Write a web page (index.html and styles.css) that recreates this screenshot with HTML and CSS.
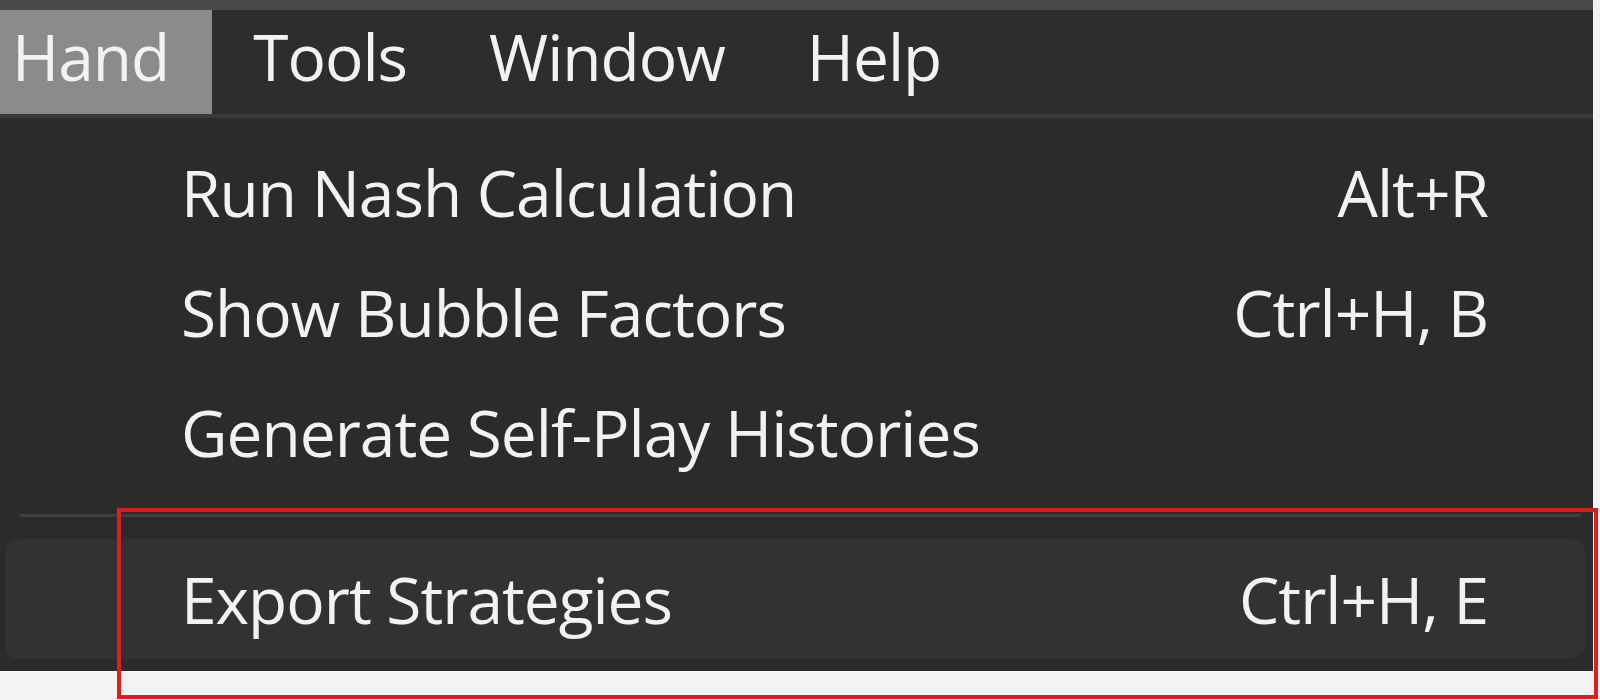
FILE: index.html
```html
<!DOCTYPE html>
<html>
<head>
<meta charset="utf-8">
<link rel="stylesheet" href="styles.css">
</head>
<body>
<div class="window">
  <div class="topstrip"></div>
  <div class="menubar">
    <div class="mb-item active">Hand</div>
    <div class="mb-item">Tools</div>
    <div class="mb-item">Window</div>
    <div class="mb-item">Help</div>
  </div>
  <div class="dropdown">
    <div class="item"><span class="label">Run Nash Calculation</span><span class="key">Alt+R</span></div>
    <div class="item"><span class="label">Show Bubble Factors</span><span class="key">Ctrl+H, B</span></div>
    <div class="item"><span class="label">Generate Self-Play Histories</span><span class="key"></span></div>
    <div class="sep"></div>
    <div class="item hover"><span class="label">Export Strategies</span><span class="key">Ctrl+H, E</span></div>
  </div>
</div>
<div class="annot"></div>
</body>
</html>
```
FILE: styles.css
```css
html, body {
  margin: 0;
  padding: 0;
}
body {
  background: #f3f3f3;
  width: 1600px;
  height: 700px;
  overflow: hidden;
  position: relative;
  font-family: "Open Sans", "Noto Sans", sans-serif;
  color: #f2f2f2;
}
.window {
  width: 1593px;
}
.topstrip {
  height: 10px;
  background: #4a4a4a;
}
.menubar {
  height: 104px;
  background: #2d2d2d;
  display: flex;
  align-items: stretch;
  border-bottom: 4px solid #3a3a3a;
}
.mb-item {
  font-size: 64px;
  letter-spacing: -1px;
  display: flex;
  align-items: center;
  padding: 0 41px 12px 41px;
}
.mb-item.active {
  background: #8b8b8b;
  padding-left: 12px;
  padding-right: 43px;
}
.dropdown {
  background: #2b2b2b;
  padding: 14px 0 12px 0;
}
.item {
  height: 120px;
  display: flex;
  align-items: center;
  justify-content: space-between;
  padding: 0 97px 0 176px;
  margin: 0 8px 0 5px;
  font-size: 64px;
  letter-spacing: -1px;
  border-radius: 14px;
}
.item.hover {
  background: #323232;
}
.sep {
  height: 3px;
  background: #3e3e3e;
  margin: 22px 12px 22px 20px;
}
.annot {
  position: absolute;
  left: 117px;
  top: 508px;
  width: 1481px;
  height: 191px;
  box-sizing: border-box;
  border: 4px solid #e01d1d;
}
```
